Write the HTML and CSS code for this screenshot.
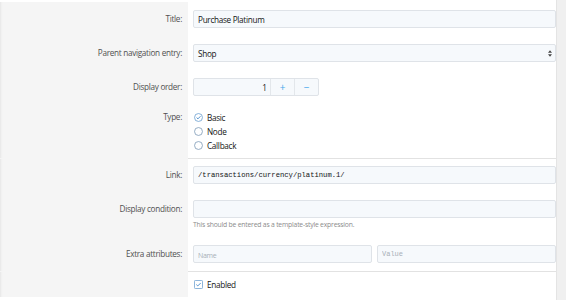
FILE: index.html
```
<!DOCTYPE html>
<html lang="en">
    <head>
    <meta charset="utf-8">
    <title>Edit navigation</title>
    <link rel="stylesheet" href="styles.css">
    </head>
    <body>
    <div class="page">
        <form class="block">
            <dl class="row first">
                <dt>Title:</dt>
                <dd><input type="text" class="input" value="Purchase Platinum"></dd>
            </dl>
            <dl class="row">
                <dt>Parent navigation entry:</dt>
                <dd>
                    <div class="select">
                        <span>Shop</span>
                        <svg width="4" height="7" viewBox="0 0 4 7"><path d="M0 2.8 L2 0.3 L4 2.8 Z M0 4.2 L2 6.7 L4 4.2 Z" fill="#444"/></svg>
                    </div>
                </dd>
            </dl>
            <dl class="row">
                <dt>Display order:</dt>
                <dd>
                    <div class="spinbox">
                        <input type="text" class="spin-input" value="1">
                        <button type="button" class="spin-btn">+</button>
                        <button type="button" class="spin-btn">&minus;</button>
                    </div>
                </dd>
            </dl>
            <dl class="row choices">
                <dt>Type:</dt>
                <dd>
                    <div class="choice">
                        <svg width="9" height="9" viewBox="0 0 10 10"><circle cx="5" cy="5" r="4.4" fill="none" stroke="#6a9fd0" stroke-width="0.9"/><path d="M2.9 5.1 L4.4 6.5 L7.2 3.6" fill="none" stroke="#3d86c9" stroke-width="1"/></svg>
                        Basic
                    </div>
                    <div class="choice">
                        <svg width="9" height="9" viewBox="0 0 10 10"><circle cx="5" cy="5" r="4.4" fill="none" stroke="#7d9ab6" stroke-width="0.9"/></svg>
                        Node
                    </div>
                    <div class="choice">
                        <svg width="9" height="9" viewBox="0 0 10 10"><circle cx="5" cy="5" r="4.4" fill="none" stroke="#7d9ab6" stroke-width="0.9"/></svg>
                        Callback
                    </div>
                </dd>
            </dl>
            <dl class="row sep">
                <dt>Link:</dt>
                <dd><input type="text" class="input mono" value="/transactions/currency/platinum.1/"></dd>
            </dl>
            <dl class="row">
                <dt>Display condition:</dt>
                <dd>
                    <input type="text" class="input">
                    <div class="hint">This should be entered as a template-style expression.</div>
                </dd>
            </dl>
            <dl class="row">
                <dt>Extra attributes:</dt>
                <dd class="pair">
                    <input type="text" class="input" placeholder="Name">
                    <input type="text" class="input mono" placeholder="Value">
                </dd>
            </dl>
            <dl class="row sep choices">
                <dt></dt>
                <dd>
                    <div class="choice">
                        <svg width="9" height="9" viewBox="0 0 10 10"><rect x="0.5" y="0.5" width="9" height="9" rx="1" fill="none" stroke="#6a9fd0" stroke-width="0.9"/><path d="M2.6 5.1 L4.2 6.6 L7.4 3.4" fill="none" stroke="#3d86c9" stroke-width="1"/></svg>
                        Enabled
                    </div>
                </dd>
            </dl>
        </form>
        <div class="gutter"></div>
    </div>
    </body>
</html>
```
FILE: styles.css
```
html, body {
    margin: 0;
    padding: 0;
    font-family: "Segoe UI", "Open Sans", Arial, sans-serif;
    font-size: 8.2px;
    letter-spacing: -0.3px;
    color: #141414;
}

.page {
    display: flex;
    height: 300px;
    overflow: hidden;
}

.block {
    flex: 0 0 556px;
    padding-top: 2px;
    background: #fff;
}

.gutter {
    flex: 1;
    background: #f0f0f0;
    border-left: 1px solid #e4e4e4;
}

.row {
    display: flex;
    margin: 0;
}

.row dt {
    flex: 0 0 182px;
    padding: 8px 6px 8px 0;
    line-height: 18px;
    text-align: right;
    color: #505050;
    background: #f5f5f5;
    box-shadow: inset 3px 0 2px -2px #e6e6e6;
}

.row dd {
    flex: 1;
    margin: 0;
    padding: 8px 0 8px 5px;
}

.row.sep dd {
    border-top: 1px solid #e2e2e2;
    padding-top: 7px;
}

.row.sep dt {
    border-top: 1px solid #f5f5f5;
    padding-top: 7px;
}

.row.choices dt {
    padding-top: 6px;
    padding-bottom: 6px;
    line-height: 14px;
}

.row.choices dd {
    padding-top: 6px;
    padding-bottom: 6px;
}

.row.sep.choices dd {
    padding-top: 5px;
}

.input {
    display: block;
    box-sizing: border-box;
    width: 100%;
    height: 18px;
    margin: 0;
    padding: 0 4px;
    border: 1px solid #dfe3e8;
    border-radius: 2px;
    background: #f6f9fc;
    font-family: inherit;
    font-size: 8.2px;
    letter-spacing: -0.3px;
    color: #141414;
}

.input.mono {
    font-family: "Liberation Mono", monospace;
    font-size: 7.2px;
    letter-spacing: 0;
}

.input::placeholder {
    color: #a8b0b8;
    font-size: 7px;
}

.select {
    display: flex;
    align-items: center;
    justify-content: space-between;
    box-sizing: border-box;
    height: 18px;
    padding: 0 3px 0 4px;
    border: 1px solid #dfe3e8;
    border-radius: 2px;
    background: #f6f9fc;
}

.spinbox {
    display: flex;
    width: 126px;
    height: 18px;
    box-sizing: border-box;
    border: 1px solid #dfe3e8;
    border-radius: 2px;
    background: #f6f9fc;
}

.spin-input {
    width: 76px;
    min-width: 0;
    flex: none;
    box-sizing: border-box;
    height: 16px;
    margin: 0;
    padding: 0 3px;
    border: none;
    background: transparent;
    text-align: right;
    font-family: inherit;
    font-size: 8.2px;
    color: #141414;
}

.spin-btn {
    width: 24px;
    flex: none;
    height: 16px;
    margin: 0;
    padding: 0;
    border: none;
    border-left: 1px solid #e3e7eb;
    background: transparent;
    color: #47a7eb;
    font-family: inherit;
    font-size: 10px;
    line-height: 14px;
}

.choice {
    display: flex;
    align-items: center;
    gap: 4px;
    height: 14px;
    padding-left: 1px;
    color: #141414;
}

.hint {
    margin-top: 2px;
    font-size: 6.8px;
    letter-spacing: -0.2px;
    line-height: 9px;
    color: #8c8c8c;
}

.pair {
    display: flex;
    gap: 5px;
}
```
